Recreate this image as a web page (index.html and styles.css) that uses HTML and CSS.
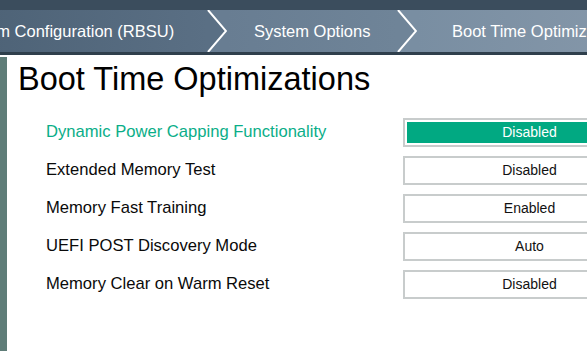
FILE: index.html
```html
<!DOCTYPE html>
<html lang="en">
<head>
    <meta charset="UTF-8">
    <meta name="viewport" content="width=device-width, initial-scale=1.0">
    <title>Boot Time Optimizations</title>
    <link rel="stylesheet" href="styles.css">
</head>
<body>
    <div class="topbar"></div>

    <nav class="crumbs">
        <div class="crumb-track">
            <span class="crumb crumb-first">System Configuration (RBSU)</span>
            <svg class="chev" width="20" height="42" viewBox="0 0 20 42">
                <rect x="0" y="0" width="20" height="42" fill="#687d92"/>
                <polygon points="0,0 19,21 0,42" fill="#5a6f84"/>
                <polyline points="1,0 19,21 1,42" fill="none" stroke="#ffffff" stroke-width="2"/>
            </svg>
            <span class="crumb crumb-mid">System Options</span>
            <svg class="chev" width="20" height="42" viewBox="0 0 20 42">
                <rect x="0" y="0" width="20" height="42" fill="#798ea2"/>
                <polygon points="0,0 19,21 0,42" fill="#6f8498"/>
                <polyline points="1,0 19,21 1,42" fill="none" stroke="#ffffff" stroke-width="2"/>
            </svg>
            <span class="crumb crumb-last">Boot Time Optimizations</span>
        </div>
    </nav>
    <div class="crumb-edge"></div>

    <div class="page">
        <div class="strip"></div>
        <div class="content">
            <h1>Boot Time Optimizations</h1>

            <div class="rows">
                <div class="row active">
                    <span class="label">Dynamic Power Capping Functionality</span>
                    <div class="value"><span>Disabled</span></div>
                </div>
                <div class="row">
                    <span class="label">Extended Memory Test</span>
                    <div class="value"><span>Disabled</span></div>
                </div>
                <div class="row">
                    <span class="label">Memory Fast Training</span>
                    <div class="value"><span>Enabled</span></div>
                </div>
                <div class="row">
                    <span class="label">UEFI POST Discovery Mode</span>
                    <div class="value"><span>Auto</span></div>
                </div>
                <div class="row">
                    <span class="label">Memory Clear on Warm Reset</span>
                    <div class="value"><span>Disabled</span></div>
                </div>
            </div>
        </div>
    </div>
</body>
</html>
```

FILE: styles.css
```css
body {
    font-family: "Liberation Sans", Arial, sans-serif;
    background-color: #ffffff;
    margin: 0;
    width: 587px;
    height: 351px;
    overflow: hidden;
}

.topbar {
    height: 10px;
    background: #3b4d5d;
}

.crumbs {
    height: 42px;
    overflow: hidden;
    background: #7f92a6;
}

.crumb-track {
    display: flex;
    height: 42px;
    margin-left: -45px;
    white-space: nowrap;
}

.crumb {
    display: flex;
    align-items: center;
    height: 42px;
    color: #ffffff;
    font-size: 16.5px;
    flex-shrink: 0;
}

.crumb-first {
    width: 252px;
    background: linear-gradient(to right, #4c6175, #5a6f84);
}

.crumb-mid {
    width: 143px;
    padding-left: 27px;
    background: linear-gradient(to right, #687d92, #6f8498);
}

.crumb-last {
    flex: 1;
    padding-left: 35px;
    background: linear-gradient(to right, #798ea2, #8597a9);
}

.chev {
    display: block;
    flex-shrink: 0;
}

.crumb-edge {
    height: 3px;
    background: #2f3f4c;
}

.page {
    display: flex;
    margin-top: 2px;
    height: 294px;
}

.strip {
    width: 7px;
    background: #5f7d78;
    flex-shrink: 0;
}

.content {
    padding-left: 11px;
    flex: 1;
}

h1 {
    margin: 6px 0 0 0;
    font-size: 32.5px;
    line-height: 32px;
    font-weight: normal;
    color: #000000;
}

.rows {
    margin-top: 18px;
    padding-left: 28px;
}

.row {
    display: flex;
    align-items: center;
    height: 38px;
}

.label {
    width: 357px;
    flex-shrink: 0;
    font-size: 16.6px;
    color: #0a0a0a;
}

.value {
    width: 253px;
    height: 29px;
    flex-shrink: 0;
    box-sizing: border-box;
    border: 2px solid #c8cccc;
    padding: 2px;
    background: #ffffff;
}

.value span {
    display: flex;
    align-items: center;
    justify-content: center;
    height: 100%;
    font-size: 14px;
    color: #111111;
}

.row.active .label {
    color: #0aae88;
}

.row.active .value span {
    background: #01a982;
    color: #ffffff;
}
```
